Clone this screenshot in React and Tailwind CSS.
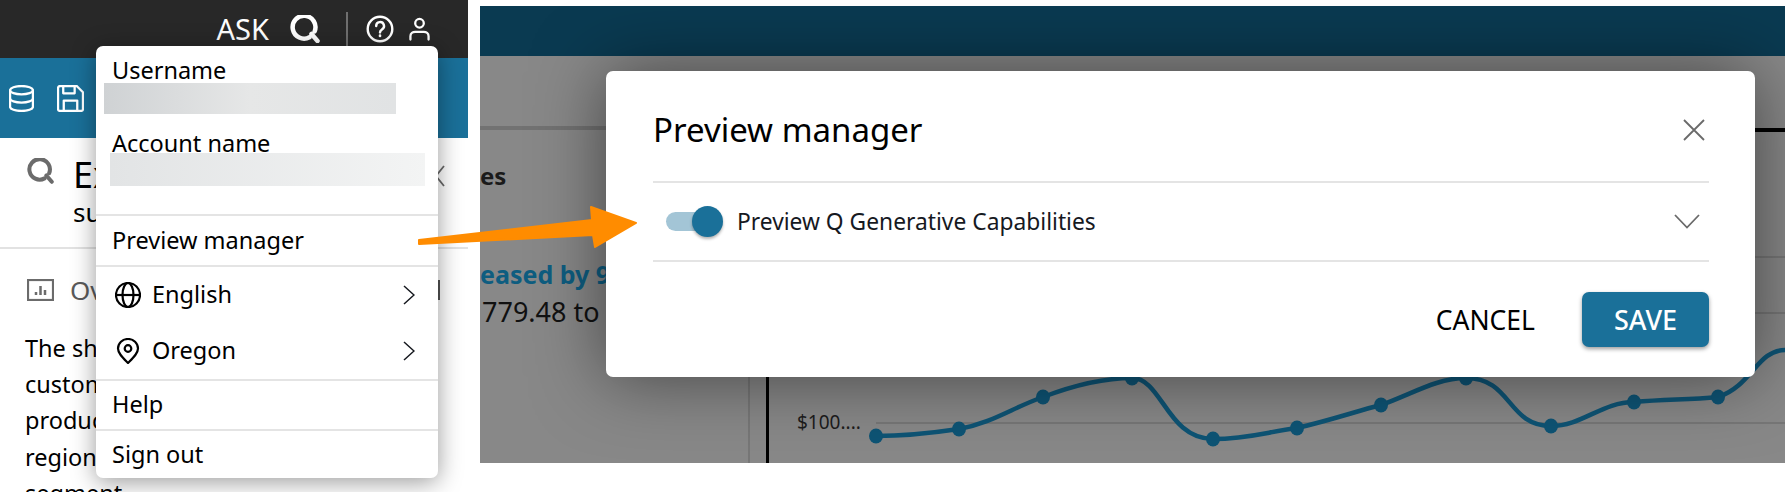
import React from "react";

function SearchQ({ className, stroke = "currentColor", width = 4.500 }) {
  return (
    <svg viewBox="0 0 30 28" className={className} fill="none" stroke={stroke} strokeWidth={width} strokeLinecap="round">
      <path d="M19.500 22.200A11.400 11.400 0 1 1 24.600 16.500" />
      <path d="M21.500 19l6 7" />
    </svg>
  );
}

function Database({ className }) {
  return (
    <svg viewBox="0 0 24 26" className={className} fill="none" stroke="currentColor" strokeWidth="2.200">
      <ellipse cx="12" cy="5" rx="11" ry="4" />
      <path d="M1 5v16c0 2.200 5 4 11 4s11-1.800 11-4V5" />
      <path d="M1 13c0 2.200 5 4 11 4s11-1.800 11-4" />
    </svg>
  );
}

function Save({ className }) {
  return (
    <svg viewBox="0 0 26 26" className={className} fill="none" stroke="currentColor" strokeWidth="2.200" strokeLinejoin="round">
      <path d="M3 1h16l6 6v16a2 2 0 0 1-2 2H3a2 2 0 0 1-2-2V3a2 2 0 0 1 2-2z" />
      <path d="M6 1v7h11V1" />
      <path d="M6.500 25V15h13v10" />
    </svg>
  );
}

function Chevron() {
  return (
    <svg viewBox="0 0 12 20" className="w-[12px] h-[20px]" fill="none" stroke="#16191f" strokeWidth="1.500">
      <path d="M1 1l10 9-10 9" />
    </svg>
  );
}

function Divider() {
  return <div className="h-[2px] shrink-0 bg-[#e4e4e4]" />;
}

function Chart() {
  return (
    <svg viewBox="0 0 1018 407" className="absolute left-[287px] top-0 w-[1018px] h-[407px]" fill="none">
      <path d="M988 201H1018M988 257H1018" stroke="#727272" strokeWidth="1.500" />
      <path d="M109 367H1018" stroke="#727272" strokeWidth="1.500" />
      <path
        d="M109 380C140 380 165 377 192 373C225 367 245 352 276 341C305 330 335 322 365 322C395 322 400 383 446 383C480 383 500 376 530 372C565 364 590 355 614 349C645 338 670 322 699 322C745 322 740 370 784 370C815 370 835 346 867 346C900 343 920 344 951 341C985 330 990 294 1018 294"
        stroke="#0e5475"
        strokeWidth="4.500"
      />
      {[[109, 380], [192, 373], [276, 341], [365, 322], [446, 383], [530, 372], [614, 349], [699, 322], [784, 370], [867, 346], [951, 341]].map(([x, y]) => (
        <ellipse key={x} cx={x} cy={y} rx="7" ry="7.500" fill="#0e5475" />
      ))}
    </svg>
  );
}

export default function App() {
  return (
    <div
      className="relative flex w-[1785px] h-[492px] overflow-hidden bg-white text-[#16191f]"
      style={{ fontFamily: '"Noto Sans", sans-serif' }}
    >
      {/* left window */}
      <div className="w-[468px] shrink-0 h-[492px] overflow-hidden flex flex-col">
        <header className="h-[58px] shrink-0 bg-[#282828] flex items-center justify-end text-white pr-[38px]">
          <span className="text-[29px] leading-none mr-[20px] -mt-[2px]">ASK</span>
          <SearchQ className="w-[32px] h-[28px] text-white" />
          <div className="w-[2px] h-[34px] bg-[#6f6f6f] ml-[25px] mr-[18px]" />
          <svg viewBox="0 0 28 28" className="w-[28px] h-[28px] mr-[15px]" fill="none" stroke="white" strokeWidth="2.400" strokeLinecap="round">
            <circle cx="14" cy="14" r="12.300" />
            <path d="M10.200 11a3.900 3.900 0 1 1 5.800 3.400c-1.300.8-2 1.400-2 3" />
            <path d="M14 20.600v.4" strokeWidth="2.600" />
          </svg>
          <svg viewBox="0 0 22 24" className="w-[21px] h-[24px]" fill="none" stroke="white" strokeWidth="2.400" strokeLinecap="round">
            <circle cx="11" cy="6" r="4.500" />
            <path d="M1.500 23v-3.500c0-3 2.500-4.500 5-4.500h9c2.500 0 5 1.500 5 4.500V23" />
          </svg>
        </header>
        <div className="h-[80px] shrink-0 bg-[#1a7099] flex items-center gap-[23px] pl-[9px] text-white">
          <Database className="w-[25px] h-[27px]" />
          <Save className="w-[27px] h-[27px]" />
        </div>
        <div className="h-[111px] shrink-0 border-b-2 border-[#e2e2e2] flex flex-col pl-[27px] pr-[23px] pt-[18px]">
          <div className="flex items-start gap-[19px]">
            <SearchQ className="w-[27px] h-[26px] mt-[2px] text-[#6b6b6b]" />
            <div className="text-[36px] leading-[38px] text-black">Ex</div>
            <svg viewBox="0 0 10 22" className="ml-auto mt-[9px] w-[10px] h-[22px]" fill="none" stroke="#6a6a6a" strokeWidth="1.800">
              <path d="M9 1L1 11l8 10" />
            </svg>
          </div>
          <div className="text-[26px] leading-[30px] pl-[46px] mt-[3px] text-black">su</div>
        </div>
        <div className="flex items-center gap-[16px] pl-[27px] pt-[28px] shrink-0">
          <svg viewBox="0 0 27 22" className="w-[27px] h-[22px]" fill="none" stroke="#6b6b6b" strokeWidth="2.200">
            <rect x="1" y="1" width="25" height="20" />
            <path d="M9 16v-3M13.500 16V7M18 16v-5" strokeWidth="2.500" />
          </svg>
          <span className="text-[26px] leading-[26px] text-[#5a5a5a]">Ov</span>
          <div className="ml-auto mr-[28px] w-[2px] h-[20px] bg-[#555555]" />
        </div>
        <div className="pl-[25px] pt-[27px] text-[23.500px] leading-[36.200px] text-black shrink-0">
          <div>The sh</div>
          <div>custom</div>
          <div>produc</div>
          <div>region</div>
          <div>segment</div>
        </div>
      </div>

      {/* right window */}
      <div className="ml-[12px] mt-[6px] h-[457px] flex-1 flex flex-col">
        <div className="h-[50px] shrink-0 bg-[#0a3a51]" />
        <div className="relative flex-1 bg-[#888888] flex overflow-hidden">
          <div className="w-[268px] shrink-0 flex flex-col">
            <div className="h-[74px] shrink-0 border-b-[4px] border-[#727272]" />
            <div className="text-[24px] leading-[28px] font-bold text-[#1a1a1a] mt-[32px]">es</div>
            <div className="text-[25px] leading-[30px] font-bold text-[#0e5d80] mt-[69px]">eased by 9</div>
            <div className="text-[27px] leading-[30px] text-[#111111] mt-[8px] pl-[2px]">779.48 to</div>
          </div>
          <div className="relative flex-1 flex">
            <div className="w-[2px] h-[333px] mt-[74px] bg-[#777777]" />
            <div className="w-[3px] h-[333px] mt-[74px] ml-[16px] bg-black" />
            <div className="absolute left-[49px] top-[354px] text-[19px] leading-[24px] text-[#1c1c1c]">$100....</div>
          </div>
          <div className="absolute inset-0 pointer-events-none">
            <Chart />
            <div className="absolute left-[1275px] right-0 top-[72px] h-[4px] bg-black" />
          </div>
        </div>
      </div>

      {/* account menu */}
      <div className="absolute left-[96px] top-[46px] w-[342px] h-[432px] bg-white rounded-[7px] shadow-[0_4px_24px_rgba(0,0,0,0.4)] flex flex-col text-[23.500px] text-black">
        <div className="h-[168px] shrink-0 flex flex-col pl-[16px]">
          <div className="leading-[30px] mt-[9px]">Username</div>
          <div className="h-[31px] w-[292px] -ml-[8px] -mt-[2px] bg-gradient-to-r from-[#cfd2d4] via-[#e6e7e7] to-[#e1e3e4]" />
          <div className="leading-[30px] mt-[14px]">Account name</div>
          <div className="h-[33px] w-[315px] -ml-[2px] -mt-[5px] bg-gradient-to-r from-[#e2e4e5] to-[#f3f4f4]" />
        </div>
        <Divider />
        <div className="h-[49px] shrink-0 flex items-center pl-[16px]">Preview manager</div>
        <Divider />
        <div className="h-[112px] shrink-0 flex flex-col pl-[19px] pr-[23px]">
          <div className="h-[56px] flex items-center">
            <svg viewBox="0 0 26 26" className="w-[26px] h-[26px] mr-[11px]" fill="none" stroke="#000" strokeWidth="2.200">
              <circle cx="13" cy="13" r="12" />
              <ellipse cx="13" cy="13" rx="5.500" ry="12" />
              <path d="M1 13h24" />
            </svg>
            <span className="flex-1">English</span>
            <Chevron />
          </div>
          <div className="h-[56px] flex items-center">
            <svg viewBox="0 0 26 26" className="w-[26px] h-[26px] mr-[11px]" fill="none" stroke="#000" strokeWidth="2.200">
              <path d="M13 25C8 20 3 15.500 3 10.500a10 9.500 0 0 1 20 0C23 15.500 18 20 13 25z" />
              <circle cx="13" cy="10.500" r="3.300" />
            </svg>
            <span className="flex-1">Oregon</span>
            <Chevron />
          </div>
        </div>
        <Divider />
        <div className="h-[48px] shrink-0 flex items-center pl-[16px]">Help</div>
        <Divider />
        <div className="flex-1 flex items-center pl-[16px]">Sign out</div>
      </div>

      {/* preview manager dialog */}
      <div className="absolute left-[606px] top-[71px] w-[1149px] h-[306px] bg-white rounded-[7px] shadow-[0_0_70px_rgba(0,0,0,0.5)] flex flex-col pl-[47px] pr-[46px]">
        <div className="h-[110px] flex items-center justify-between shrink-0 pt-[7px] pr-[4px]">
          <h2 className="text-[33px] leading-[40px] text-black">Preview manager</h2>
          <svg viewBox="0 0 22 22" className="w-[22px] h-[22px]" fill="none" stroke="#6a6a6a" strokeWidth="1.800">
            <path d="M1 1l20 20M21 1L1 21" />
          </svg>
        </div>
        <Divider />
        <div className="h-[77px] flex items-center shrink-0">
          <div className="relative w-[55px] h-[19px] rounded-full bg-[#a3c5d6] ml-[13px]">
            <div className="absolute right-[-2px] top-[-6px] w-[31px] h-[31px] rounded-full bg-[#1a7099] shadow-[0_2px_3px_rgba(0,0,0,0.3)]" />
          </div>
          <span className="ml-[16px] flex-1 text-[22.800px] leading-[28px] text-[#16191f]">Preview Q Generative Capabilities</span>
          <svg viewBox="0 0 26 15" className="w-[26px] h-[15px] mr-[9px]" fill="none" stroke="#6a6a6a" strokeWidth="1.800">
            <path d="M1 1l12 12.500L25 1" />
          </svg>
        </div>
        <Divider />
        <div className="flex justify-end items-start pt-[30px]">
          <button className="h-[55px] text-[26.500px] leading-none text-black mr-[47px] pt-[1px]">CANCEL</button>
          <button className="h-[55px] w-[127px] rounded-[7px] bg-[#1a7099] text-white text-[27px] leading-none font-medium shadow-[0_2px_4px_rgba(0,0,0,0.4)]">SAVE</button>
        </div>
      </div>

      {/* orange arrow */}
      <svg viewBox="0 0 1785 492" className="absolute left-0 top-0 w-[1785px] h-[492px] pointer-events-none">
        <path
          d="M419 240L592 220L591 207L636 223L595 247L593 235L419 244Z"
          fill="#ff8c00"
          stroke="#ff8c00"
          strokeWidth="2"
          strokeLinejoin="round"
        />
      </svg>
    </div>
  );
}
